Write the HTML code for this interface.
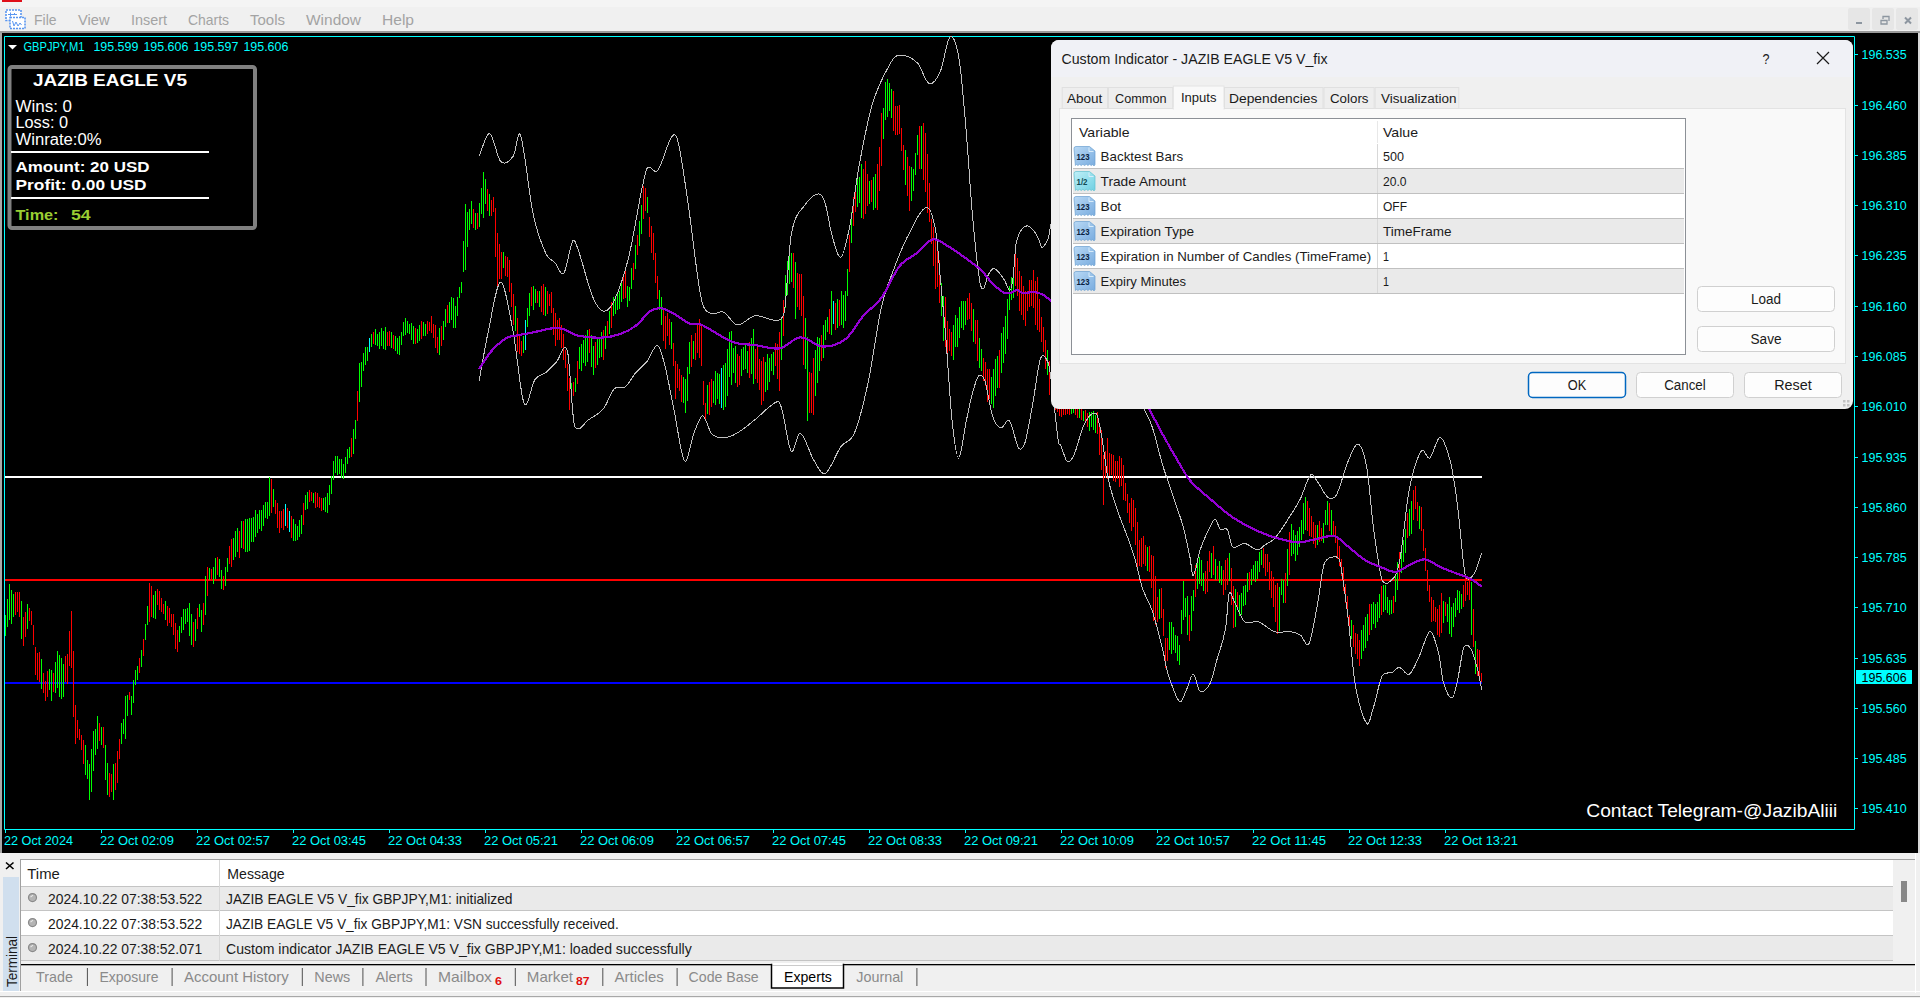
<!DOCTYPE html><html><head><meta charset="utf-8"><style>html,body{margin:0;padding:0;width:1920px;height:998px;overflow:hidden;background:#f0f0f0;font-family:"Liberation Sans",sans-serif}</style></head><body><svg width="1920" height="998" viewBox="0 0 1920 998" font-family="Liberation Sans" style="position:absolute;left:0;top:0">
<rect x="0" y="0" width="1920" height="998" fill="#f0f0f0"/>
<rect x="0" y="0" width="1920" height="7" fill="#f4f4f4"/>
<rect x="2" y="0" width="20" height="2" fill="#e0101a"/>
<rect x="0" y="7" width="1920" height="25" fill="#f0f0f0"/>
<rect x="0" y="31" width="1920" height="2" fill="#9a9a9a"/>
<g transform="translate(5,9)" fill="none"><rect x="1" y="1" width="15" height="10.5" fill="#fff" stroke="#5a96f0" stroke-width="1.6" stroke-dasharray="2 1"/><rect x="5" y="8.5" width="15" height="11" fill="#fff" stroke="#5a96f0" stroke-width="1.6" stroke-dasharray="2 1"/><path d="M3 5.5h9M5.5 3.5v4M9 4l2 2" stroke="#5a96f0" stroke-width="1"/><path d="M7.5 12l1.5 5 2-4 2 4 2-3 1.5 2" stroke="#5a96f0" stroke-width="1"/></g>
<text x="34" y="25.2" font-size="15" fill="#a3a3a3" textLength="22.5" lengthAdjust="spacingAndGlyphs">File</text>
<text x="78" y="25.2" font-size="15" fill="#a3a3a3" textLength="31.5" lengthAdjust="spacingAndGlyphs">View</text>
<text x="131" y="25.2" font-size="15" fill="#a3a3a3" textLength="36" lengthAdjust="spacingAndGlyphs">Insert</text>
<text x="188" y="25.2" font-size="15" fill="#a3a3a3" textLength="41" lengthAdjust="spacingAndGlyphs">Charts</text>
<text x="250" y="25.2" font-size="15" fill="#a3a3a3" textLength="35" lengthAdjust="spacingAndGlyphs">Tools</text>
<text x="306" y="25.2" font-size="15" fill="#a3a3a3" textLength="55" lengthAdjust="spacingAndGlyphs">Window</text>
<text x="382" y="25.2" font-size="15" fill="#a3a3a3" textLength="32" lengthAdjust="spacingAndGlyphs">Help</text>
<rect x="1848" y="8" width="22" height="22" rx="2" fill="#e6e6e6"/>
<rect x="1872" y="8" width="22" height="22" rx="2" fill="#e6e6e6"/>
<rect x="1896" y="8" width="22" height="22" rx="2" fill="#e6e6e6"/>
<path d="M1856 23h6" stroke="#8d96a0" stroke-width="2"/>
<path d="M1881 20.5h6v3.5h-6z M1883 19v-2.5h6v4.5" stroke="#8d96a0" stroke-width="1.3" fill="none"/>
<path d="M1905 17.5l6 6M1911 17.5l-6 6" stroke="#8d96a0" stroke-width="2"/>
<rect x="0" y="33" width="2" height="820" fill="#a8a8a8"/>
<rect x="2" y="33" width="1916" height="820" fill="#000"/>
<rect x="1918" y="33" width="2" height="820" fill="#d8d8d8"/>
<path d="M4.5 36.5H1854.5V829.5H4.5Z" stroke="#00ffff" fill="none" stroke-width="1"/>
<rect x="5" y="476" width="1477" height="2" fill="#ffffff"/>
<rect x="5" y="579" width="1477" height="2" fill="#ff0000"/>
<rect x="5" y="682" width="1477" height="2" fill="#0000ff"/>
<path d="M5.5 615V636M7.5 599V627M9.5 584V620M11.5 590V624M13.5 594V617M21.5 601V639M27.5 604V629M41.5 659V689M49.5 669V690M51.5 670V701M55.5 662V693M57.5 651V688M59.5 655V697M61.5 658V699M63.5 664V697M85.5 745V775M87.5 760V779M89.5 764V800M91.5 749V792M93.5 731V771M95.5 729V755M97.5 716V749M101.5 727V745M105.5 745V780M107.5 763V795M113.5 764V800M121.5 723V744M123.5 719V734M125.5 696V739M127.5 695V716M131.5 696V715M133.5 680V703M135.5 670V685M137.5 666V680M141.5 650V667M145.5 624V640M147.5 606V625M153.5 595V618M155.5 591V619M165.5 601V620M179.5 626V642M181.5 617V633M183.5 609V630M185.5 609V624M187.5 608V622M189.5 603V636M191.5 614V645M195.5 619V641M199.5 604V617M201.5 610V632M205.5 576V615M209.5 568V580M213.5 567V584M215.5 558V579M219.5 559V577M221.5 570V589M225.5 567V586M227.5 558V572M233.5 538V560M235.5 531V557M237.5 528V552M241.5 521V548M245.5 519V552M247.5 519V552M249.5 518V551M251.5 518V542M253.5 517V542M255.5 510V537M257.5 514V533M259.5 510V529M261.5 510V531M263.5 505V526M265.5 502V518M267.5 502V519M269.5 477V516M273.5 489V507M293.5 519V541M295.5 524V541M297.5 526V540M299.5 520V537M301.5 515V534M305.5 495V510M307.5 492V509M313.5 493V503M323.5 498V510M325.5 497V512M327.5 493V513M329.5 485V505M331.5 476V494M333.5 461V480M335.5 456V473M337.5 456V475M339.5 459V474M341.5 459V478M343.5 464V479M345.5 457V473M347.5 449V464M349.5 447V458M353.5 429V454M355.5 420V439M359.5 363V402M361.5 362V387M363.5 353V371M365.5 347V365M367.5 347V361M371.5 334V347M375.5 329V345M377.5 334V346M379.5 332V349M381.5 328V346M383.5 331V349M385.5 327V350M391.5 332V348M395.5 336V351M397.5 338V354M399.5 336V355M401.5 332V345M403.5 322V336M405.5 318V335M407.5 321V333M409.5 324V334M411.5 323V340M413.5 326V344M417.5 329V343M419.5 325V341M423.5 322V336M425.5 324V336M439.5 328V355M443.5 321V340M445.5 309V327M449.5 302V323M451.5 297V320M453.5 298V328M455.5 306V328M457.5 297V316M459.5 287V298M461.5 282V293M463.5 241V272M465.5 204V270M467.5 212V247M469.5 209V230M471.5 201V224M475.5 213V230M479.5 203V227M481.5 188V214M483.5 172V218M485.5 179V204M489.5 194V216M503.5 252V268M515.5 306V331M523.5 336V353M527.5 308V327M529.5 293V316M533.5 286V310M535.5 289V303M539.5 291V307M545.5 287V316M571.5 383V399M575.5 378V392M579.5 347V369M581.5 344V371M583.5 340V363M585.5 335V366M587.5 330V362M591.5 335V367M593.5 346V375M597.5 337V365M599.5 338V358M601.5 332V357M605.5 326V349M609.5 311V334M613.5 297V316M615.5 298V314M617.5 292V310M619.5 291V309M621.5 280V302M627.5 286V307M629.5 287V301M631.5 268V289M635.5 245V269M639.5 221V246M641.5 205V234M647.5 197V213M659.5 290V310M661.5 297V325M671.5 322V349M683.5 377V403M685.5 379V413M687.5 367V401M689.5 342V374M693.5 341V359M707.5 385V414M713.5 381V403M715.5 371V405M717.5 373V399M719.5 374V404M723.5 365V410M725.5 363V407M727.5 349V396M729.5 332V377M731.5 331V385M733.5 348V373M735.5 346V383M741.5 349V376M743.5 347V370M745.5 344V369M747.5 351V373M751.5 338V374M753.5 329V384M765.5 362V392M767.5 354V390M769.5 358V382M771.5 354V371M773.5 352V375M781.5 318V360M785.5 275V308M787.5 261V295M789.5 248V284M791.5 253V282M795.5 262V319M805.5 318V369M807.5 337V421M815.5 350V396M817.5 337V383M819.5 338V371M823.5 325V358M825.5 320V340M827.5 317V332M831.5 291V335M837.5 299V328M841.5 291V325M843.5 295V328M845.5 291V321M847.5 269V296M851.5 212V243M857.5 178V207M859.5 177V203M861.5 164V218M869.5 181V204M873.5 177V210M875.5 174V208M883.5 108V139M885.5 82V120M887.5 79V117M889.5 83V111M891.5 89V118M905.5 150V185M911.5 167V201M913.5 169V191M915.5 153V175M917.5 135V155M921.5 126V169M941.5 283V316M943.5 296V341M953.5 325V360M955.5 315V347M957.5 318V347M959.5 307V338M961.5 301V328M963.5 301V330M965.5 301V325M973.5 309V342M979.5 338V368M981.5 349V371M991.5 377V404M993.5 369V408M995.5 359V396M997.5 356V388M1001.5 333V373M1003.5 327V363M1005.5 316V354M1007.5 299V339M1009.5 286V310M1011.5 277V300M1013.5 267V298M1047.5 350V375M1071.5 407V414M1073.5 407V413M1079.5 408V418M1083.5 411V421M1089.5 412V431M1091.5 412V427M1093.5 411V430M1095.5 415V433M1147.5 547V571M1159.5 589V619M1169.5 622V650M1171.5 622V654M1173.5 627V650M1175.5 635V653M1177.5 636V661M1179.5 645V665M1181.5 610V634M1183.5 581V620M1185.5 598V617M1187.5 596V635M1191.5 596V631M1193.5 590V611M1197.5 559V589M1199.5 557V584M1201.5 560V586M1203.5 573V591M1211.5 553V578M1215.5 559V580M1219.5 561V583M1221.5 566V585M1229.5 553V581M1235.5 589V627M1239.5 595V616M1241.5 593V615M1243.5 586V606M1245.5 585V605M1247.5 573V592M1251.5 569V585M1253.5 565V580M1255.5 561V582M1257.5 561V579M1259.5 552V572M1261.5 550V565M1279.5 587V631M1281.5 579V595M1283.5 580V603M1287.5 549V586M1291.5 524V556M1293.5 530V554M1295.5 535V561M1297.5 531V555M1299.5 527V547M1301.5 520V540M1303.5 503V534M1305.5 497V530M1317.5 525V545M1323.5 523V543M1325.5 510V525M1327.5 501V525M1331.5 510V537M1351.5 620V639M1361.5 630V659M1363.5 625V651M1365.5 617V648M1367.5 614V641M1371.5 604V630M1373.5 602V624M1375.5 604V628M1377.5 602V622M1379.5 594V618M1383.5 585V612M1385.5 585V610M1387.5 597V613M1389.5 600V615M1391.5 600V614M1395.5 575V602M1397.5 562V590M1401.5 546V573M1403.5 540V562M1405.5 529V553M1409.5 509V536M1411.5 501V534M1419.5 506V529M1443.5 601V623M1447.5 604V622M1449.5 597V634M1451.5 607V637M1453.5 603V627M1455.5 598V617M1457.5 590V610M1459.5 591V613M1461.5 594V609M1471.5 582V635M1475.5 641V674" stroke="#00ff00" stroke-width="1"/>
<path d="M15.5 592V615M17.5 592V612M19.5 592V617M23.5 617V646M25.5 612V637M29.5 608V621M31.5 611V625M33.5 625V645M35.5 647V675M37.5 653V680M39.5 652V682M43.5 673V693M45.5 681V701M47.5 671V697M53.5 673V692M65.5 656V682M67.5 654V684M69.5 631V666M71.5 611V668M73.5 651V717M75.5 705V744M77.5 720V738M79.5 729V740M81.5 735V750M83.5 740V764M99.5 723V741M103.5 727V748M109.5 773V797M111.5 774V792M115.5 763V790M117.5 751V783M119.5 739V759M129.5 692V700M139.5 658V673M143.5 639V656M149.5 583V622M151.5 586V617M157.5 589V605M159.5 591V610M161.5 598V612M163.5 604V614M167.5 606V626M169.5 608V623M171.5 614V627M173.5 614V635M175.5 623V649M177.5 630V652M193.5 622V647M197.5 608V629M203.5 603V625M207.5 567V596M211.5 569V581M217.5 557V575M223.5 576V590M229.5 546V564M231.5 539V567M239.5 531V558M243.5 521V549M271.5 479V513M275.5 500V514M277.5 503V528M279.5 511V533M281.5 511V528M283.5 509V530M287.5 508V528M291.5 516V538M303.5 503V525M309.5 490V502M311.5 492V501M315.5 492V508M317.5 493V507M319.5 497V508M321.5 498V511M351.5 438V457M357.5 391V421M373.5 332V344M387.5 332V346M389.5 331V346M393.5 335V349M415.5 328V344M421.5 321V339M427.5 321V334M429.5 322V331M431.5 316V333M433.5 324V338M435.5 325V348M437.5 337V353M441.5 326V346M447.5 305V323M473.5 209V228M477.5 213V229M487.5 189V211M491.5 200V216M493.5 197V212M495.5 208V257M497.5 233V289M499.5 244V279M501.5 252V279M505.5 256V276M507.5 257V277M509.5 260V292M511.5 283V307M513.5 294V325M517.5 318V352M519.5 335V354M521.5 341V356M531.5 287V306M537.5 291V303M541.5 286V312M543.5 284V315M547.5 291V314M549.5 294V306M551.5 292V313M553.5 308V335M555.5 313V346M557.5 320V340M559.5 318V340M561.5 325V348M563.5 334V360M565.5 350V368M567.5 364V391M569.5 378V410M573.5 382V396M577.5 361V384M589.5 329V353M595.5 342V368M603.5 330V360M607.5 321V338M611.5 302V328M623.5 274V299M625.5 269V298M633.5 263V280M637.5 235V255M643.5 186V219M645.5 188V211M649.5 217V237M651.5 226V253M653.5 233V260M655.5 253V283M657.5 276V299M663.5 308V341M665.5 316V349M667.5 313V336M669.5 319V345M673.5 343V366M675.5 361V399M677.5 364V388M679.5 369V391M681.5 375V402M691.5 335V367M695.5 333V360M697.5 323V353M699.5 319V358M701.5 325V366M703.5 381V405M705.5 403V420M709.5 382V415M711.5 379V407M737.5 354V387M739.5 356V385M749.5 342V378M755.5 349V379M757.5 346V383M759.5 359V390M761.5 361V405M763.5 357V401M775.5 343V366M777.5 344V379M779.5 332V391M783.5 300V336M793.5 253V288M797.5 273V307M799.5 274V310M801.5 274V316M803.5 296V365M809.5 372V413M811.5 373V413M813.5 358V415M821.5 335V361M829.5 309V334M835.5 303V330M839.5 300V326M849.5 235V272M853.5 197V226M855.5 188V212M863.5 169V219M865.5 161V214M867.5 174V206M871.5 180V202M877.5 164V210M879.5 147V191M881.5 113V166M893.5 91V131M895.5 106V135M897.5 106V135M899.5 105V134M901.5 128V151M903.5 145V170M907.5 157V196M909.5 166V211M919.5 126V169M923.5 123V180M925.5 133V192M927.5 154V213M929.5 183V222M931.5 219V244M933.5 227V266M935.5 239V289M937.5 251V287M939.5 260V303M945.5 297V347M947.5 321V353M949.5 329V351M951.5 332V356M967.5 298V320M969.5 293V319M971.5 303V331M975.5 320V344M977.5 320V361M983.5 358V381M985.5 362V386M987.5 369V402M989.5 369V399M999.5 350V388M1015.5 254V286M1017.5 258V296M1019.5 271V311M1021.5 276V315M1023.5 286V320M1025.5 291V326M1027.5 291V311M1029.5 280V307M1031.5 280V306M1033.5 270V308M1035.5 281V325M1037.5 277V330M1039.5 299V332M1041.5 317V342M1043.5 327V352M1045.5 340V369M1049.5 361V395M1051.5 381V401M1053.5 387V403M1055.5 390V410M1057.5 397V412M1059.5 406V416M1061.5 407V417M1063.5 408V415M1065.5 407V415M1067.5 408V414M1069.5 408V415M1075.5 409V415M1077.5 408V418M1081.5 407V420M1085.5 410V423M1087.5 413V427M1097.5 412V434M1099.5 423V455M1101.5 430V470M1103.5 455V505M1105.5 451V478M1107.5 438V479M1109.5 453V476M1111.5 454V475M1113.5 455V481M1115.5 461V482M1117.5 461V479M1119.5 456V487M1121.5 458V486M1123.5 465V500M1125.5 483V501M1127.5 494V513M1129.5 503V523M1131.5 498V531M1133.5 500V527M1135.5 508V545M1137.5 522V567M1139.5 540V566M1141.5 538V567M1143.5 536V564M1145.5 545V566M1149.5 546V572M1151.5 555V588M1153.5 556V621M1155.5 576V625M1157.5 597V622M1161.5 588V618M1163.5 609V636M1165.5 638V668M1167.5 638V661M1189.5 615V641M1195.5 565V597M1205.5 571V594M1207.5 561V592M1209.5 551V572M1213.5 546V575M1217.5 566V580M1223.5 570V595M1225.5 560V590M1227.5 558V585M1231.5 568V605M1233.5 586V628M1237.5 592V609M1249.5 572V590M1263.5 548V568M1265.5 554V576M1267.5 554V572M1269.5 562V590M1271.5 571V598M1273.5 577V607M1275.5 585V622M1277.5 583V634M1285.5 573V603M1289.5 532V575M1307.5 501V531M1309.5 508V536M1311.5 516V537M1313.5 522V544M1315.5 525V548M1319.5 521V542M1321.5 528V541M1329.5 503V531M1333.5 521V537M1335.5 526V543M1337.5 539V559M1339.5 546V566M1341.5 559V576M1343.5 567V591M1345.5 584V603M1347.5 596V618M1349.5 615V633M1353.5 625V647M1355.5 633V654M1357.5 634V659M1359.5 640V666M1369.5 604V635M1381.5 586V615M1393.5 596V613M1399.5 552V579M1407.5 513V538M1413.5 490V520M1415.5 486V509M1417.5 502V521M1421.5 507V531M1423.5 529V551M1425.5 548V571M1427.5 570V591M1429.5 585V602M1431.5 597V622M1433.5 600V621M1435.5 607V622M1437.5 609V635M1439.5 605V637M1441.5 593V633M1445.5 602V616M1463.5 585V607M1465.5 578V601M1467.5 582V595M1469.5 577V600M1473.5 609V647M1477.5 649V676M1479.5 650V680M1481.5 673V682" stroke="#ff0000" stroke-width="1"/>
<path d="M285.5 504V526M289.5 511V532M369.5 338V352M525.5 320V350M721.5 368V408M833.5 301V324" stroke="#00ffff" stroke-width="1"/>
<path d="M479.0 156.1 C482.6 148.6 486.2 132.8 489.8 133.7 C493.4 134.6 497.1 158.0 500.7 161.5 C504.9 165.5 509.1 161.7 513.3 156.1 C515.7 152.9 518.1 128.2 520.5 135.2 C524.7 147.4 528.9 194.1 533.1 213.8 C537.3 233.5 541.5 244.0 545.8 253.5 C548.8 260.2 551.8 259.2 554.8 262.5 C557.8 265.8 560.8 276.9 563.8 273.3 C566.8 269.7 569.8 245.7 572.8 240.9 C574.6 237.9 576.4 244.8 578.2 249.9 C583.0 263.4 587.8 285.1 592.7 296.8 C596.3 305.5 599.9 310.6 603.5 311.2 C607.1 311.8 610.7 308.1 614.3 300.4 C619.1 290.1 623.9 276.6 628.7 257.1 C634.7 232.7 640.8 186.7 646.8 168.7 C650.4 163.3 654.0 174.7 657.6 170.5 C663.6 163.5 669.6 130.6 675.6 135.2 C679.2 137.9 682.8 169.1 686.5 192.2 C691.3 222.9 696.1 272.0 700.9 296.8 C703.9 312.3 706.9 311.0 709.9 313.0 C714.4 316.1 719.0 310.2 723.5 312.2 C728.1 314.1 732.6 324.3 737.1 324.8 C743.1 325.5 749.1 316.5 755.1 315.8 C762.6 314.9 770.2 321.5 777.7 320.3 C779.9 319.9 782.2 320.3 784.5 311.3 C786.7 297.0 789.0 246.3 791.2 234.6 C795.7 211.0 800.3 212.0 804.8 205.2 C809.3 198.5 813.8 194.4 818.3 193.9 C820.6 193.7 822.8 196.2 825.1 203.0 C827.3 209.7 829.6 226.8 831.8 234.6 C834.8 244.9 837.9 258.6 840.9 257.1 C843.9 255.6 846.9 240.6 849.9 225.5 C852.9 210.5 855.9 183.1 858.9 166.9 C863.4 142.5 867.9 118.5 872.5 103.7 C878.5 83.9 884.5 73.9 890.5 63.1 C893.5 57.7 896.5 55.0 899.5 55.0 C905.5 55.0 911.6 57.2 917.6 63.1 C921.3 66.7 925.1 81.9 928.9 83.4 C932.6 84.9 936.4 80.3 940.1 72.1 C943.5 64.8 946.8 39.3 950.1 36.9 C953.1 34.8 956.0 41.6 959.0 58.6 C961.3 71.4 963.5 99.9 965.8 126.3 C968.1 152.6 970.3 191.6 972.6 216.5 C975.0 243.9 977.5 266.9 980.0 283.0 C981.2 288.4 982.4 289.6 983.6 288.4 C985.2 286.8 986.8 277.5 988.4 274.6 C990.4 270.9 992.4 268.0 994.4 268.6 C997.6 269.6 1000.8 274.9 1004.0 279.4 C1006.0 282.2 1008.0 290.6 1010.0 290.3 C1011.0 290.1 1012.0 285.6 1013.0 278.0 C1014.0 270.4 1015.0 249.9 1016.0 244.5 C1018.0 233.6 1020.0 232.1 1022.0 229.0 C1024.0 226.0 1026.0 225.7 1028.0 226.0 C1030.0 226.3 1032.0 228.5 1034.0 231.0 C1035.7 233.1 1037.3 236.1 1039.0 239.7 C1039.8 241.4 1040.6 246.4 1041.4 247.0 C1042.6 248.0 1043.8 246.1 1045.0 244.5 C1046.2 242.9 1047.4 241.2 1048.6 237.3 C1049.7 233.7 1050.9 220.0 1052.0 222.0 C1080.9 273.2 1109.8 338.0 1138.8 396.8 C1140.5 400.3 1142.2 404.9 1143.9 408.7 C1146.7 415.1 1149.6 419.0 1152.4 427.5 C1155.8 437.7 1159.2 453.4 1162.6 464.9 C1164.9 472.7 1167.2 478.6 1169.4 485.4 C1171.7 492.2 1174.0 499.0 1176.2 505.8 C1178.5 512.6 1180.8 517.7 1183.1 526.2 C1185.3 534.8 1187.6 545.9 1189.9 556.9 C1191.0 562.4 1192.1 576.4 1193.3 575.6 C1195.5 574.1 1197.8 556.7 1200.1 550.1 C1203.5 540.2 1206.9 533.1 1210.3 526.2 C1212.0 522.8 1213.7 518.9 1215.4 519.4 C1217.1 520.0 1218.8 528.2 1220.5 529.6 C1222.8 531.6 1225.1 526.4 1227.3 529.6 C1229.0 532.1 1230.7 545.3 1232.4 546.7 C1236.4 549.9 1240.4 542.7 1244.4 543.3 C1248.9 543.9 1253.4 549.7 1258.0 550.1 C1260.3 550.3 1262.5 546.6 1264.8 545.0 C1268.2 542.6 1271.6 542.1 1275.0 538.2 C1280.1 532.3 1285.1 523.7 1290.2 515.8 C1293.6 510.5 1297.0 505.6 1300.4 498.8 C1303.8 492.0 1307.2 478.3 1310.7 474.9 C1312.9 472.7 1315.2 478.8 1317.5 481.7 C1320.9 486.2 1324.3 494.6 1327.7 497.1 C1330.5 499.1 1333.4 499.6 1336.2 495.4 C1340.2 488.4 1344.1 470.5 1348.1 461.3 C1351.5 453.4 1354.9 443.0 1358.3 444.3 C1361.2 445.3 1364.0 452.4 1366.9 468.1 C1369.1 480.7 1371.4 512.8 1373.7 529.4 C1376.5 550.2 1379.3 570.7 1382.2 580.5 C1384.5 583.9 1386.7 584.5 1389.0 582.2 C1392.4 578.8 1395.8 579.1 1399.2 563.5 C1402.6 547.9 1406.0 505.8 1409.4 488.6 C1413.4 468.4 1417.4 457.1 1421.3 451.1 C1424.2 446.8 1427.0 460.0 1429.9 457.9 C1433.3 455.4 1436.7 436.9 1440.1 437.5 C1443.5 438.0 1446.9 448.4 1450.3 461.3 C1452.6 469.9 1454.8 485.0 1457.1 502.2 C1460.0 523.6 1462.8 565.2 1465.6 577.1 C1468.5 581.4 1471.3 577.9 1474.1 573.7 C1476.6 570.0 1479.1 560.1 1481.6 553.3" stroke="#c0c0c0" fill="none" stroke-width="1" shape-rendering="crispEdges"/>
<path d="M479.0 381.5 C482.0 365.3 485.0 346.6 488.0 332.8 C492.2 313.6 496.5 282.3 500.7 282.3 C504.9 282.3 509.1 311.2 513.3 332.8 C516.9 351.4 520.5 395.4 524.1 403.2 C527.7 411.0 531.3 384.9 534.9 379.7 C538.5 374.6 542.2 375.5 545.8 372.5 C549.4 369.5 553.0 365.3 556.6 361.7 C560.2 358.1 563.8 340.1 567.4 350.9 C569.8 359.5 572.2 419.0 574.6 426.6 C579.4 433.9 584.2 422.4 589.0 419.4 C593.9 416.4 598.7 414.4 603.5 408.6 C607.1 404.2 610.7 392.4 614.3 388.8 C617.9 385.2 621.5 389.7 625.1 387.0 C628.7 384.2 632.3 376.7 635.9 372.5 C639.6 368.3 643.2 366.2 646.8 361.7 C650.4 357.2 654.0 344.7 657.6 345.5 C660.0 345.9 662.4 356.0 664.8 365.3 C667.8 377.0 670.8 394.1 673.8 408.6 C677.4 426.0 681.0 456.3 684.6 460.9 C687.7 464.7 690.7 441.4 693.7 433.9 C696.7 426.3 699.7 415.8 702.7 415.8 C705.7 415.8 708.7 430.7 711.7 433.9 C715.6 438.0 719.6 437.7 723.5 437.6 C728.1 437.5 732.6 435.7 737.1 433.1 C743.1 429.7 749.1 424.3 755.1 419.6 C762.6 413.7 770.2 404.0 777.7 401.5 C779.2 401.0 780.7 405.0 782.2 410.5 C785.2 421.6 788.2 447.4 791.2 451.2 C794.2 454.9 797.2 431.9 800.3 433.1 C804.8 434.9 809.3 452.8 813.8 460.2 C817.6 466.3 821.3 475.6 825.1 473.7 C830.3 471.1 835.6 453.9 840.9 446.6 C845.4 440.4 849.9 443.6 854.4 433.1 C858.9 422.6 863.4 404.5 867.9 383.5 C872.5 362.4 877.0 326.3 881.5 306.8 C886.0 287.2 890.5 278.2 895.0 266.1 C899.5 254.1 904.0 242.9 908.6 234.6 C914.6 223.4 920.6 208.5 926.6 207.5 C929.6 207.0 932.6 214.3 935.6 230.0 C937.3 238.5 938.9 262.8 940.5 280.0 C942.3 299.4 944.2 317.7 946.0 340.0 C948.0 364.3 950.0 401.1 952.0 420.0 C954.2 440.5 956.3 458.0 958.5 458.0 C961.2 458.0 963.8 432.4 966.5 420.0 C968.3 411.4 970.2 401.7 972.0 395.0 C974.2 387.1 976.3 378.6 978.5 376.0 C980.5 373.6 982.6 376.0 984.6 380.0 C987.3 387.6 989.9 408.0 992.6 416.0 C995.3 424.0 997.9 427.2 1000.6 428.0 C1003.6 428.9 1006.6 417.7 1009.6 421.0 C1012.6 424.3 1015.6 443.4 1018.6 448.0 C1020.6 451.1 1022.6 448.0 1024.6 444.0 C1027.3 435.6 1030.0 418.4 1032.7 404.0 C1035.4 389.8 1038.0 364.7 1040.7 358.0 C1043.4 352.0 1046.0 358.0 1048.7 364.0 C1052.0 379.9 1055.4 421.1 1058.7 444.0 C1059.3 444.9 1059.9 443.6 1060.4 444.5 C1062.7 449.2 1065.0 459.8 1067.2 461.5 C1069.5 463.2 1071.8 459.7 1074.1 454.7 C1077.5 447.2 1080.9 430.3 1084.3 424.1 C1088.3 416.7 1092.2 411.5 1096.2 413.8 C1097.9 414.9 1099.6 425.0 1101.3 434.3 C1103.6 446.6 1105.8 468.1 1108.1 478.6 C1111.5 494.2 1114.9 502.4 1118.3 512.6 C1121.7 522.8 1125.1 530.3 1128.6 539.9 C1130.8 546.2 1133.1 552.4 1135.4 560.3 C1137.6 568.2 1139.9 580.7 1142.2 587.5 C1145.6 597.8 1149.0 601.2 1152.4 611.4 C1155.8 621.6 1159.2 635.2 1162.6 648.9 C1164.3 655.7 1166.0 667.4 1167.7 672.7 C1171.7 685.0 1175.7 698.0 1179.6 701.6 C1181.9 703.7 1184.2 694.3 1186.5 689.7 C1188.7 685.2 1191.0 674.1 1193.3 674.4 C1195.5 674.7 1197.8 690.3 1200.1 691.4 C1203.5 693.1 1206.9 689.4 1210.3 682.9 C1212.6 678.6 1214.8 667.1 1217.1 659.1 C1220.0 649.0 1222.8 643.8 1225.6 628.4 C1226.8 622.3 1227.9 598.0 1229.0 594.4 C1230.7 588.9 1232.4 598.1 1234.1 601.2 C1237.5 607.2 1241.0 618.7 1244.4 621.6 C1248.9 625.5 1253.4 620.1 1258.0 621.6 C1263.7 623.5 1269.3 630.1 1275.0 631.8 C1280.1 633.4 1285.1 631.0 1290.2 631.6 C1293.6 632.0 1297.0 632.8 1300.4 635.0 C1303.3 636.8 1306.1 648.6 1309.0 643.5 C1311.8 638.4 1314.6 619.2 1317.5 604.4 C1319.7 592.5 1322.0 569.8 1324.3 563.5 C1327.7 556.7 1331.1 557.4 1334.5 556.7 C1336.2 556.3 1337.9 556.7 1339.6 560.1 C1342.4 572.9 1345.3 595.3 1348.1 618.0 C1350.4 636.1 1352.7 669.9 1354.9 682.7 C1358.9 705.1 1362.9 718.5 1366.9 723.6 C1369.1 726.5 1371.4 713.6 1373.7 706.5 C1376.5 697.7 1379.3 681.0 1382.2 675.9 C1385.6 670.8 1389.0 674.2 1392.4 672.5 C1394.7 671.3 1396.9 667.1 1399.2 667.4 C1402.6 667.7 1406.0 676.2 1409.4 674.2 C1412.8 672.2 1416.2 662.5 1419.6 655.4 C1423.1 648.4 1426.5 632.2 1429.9 631.6 C1432.7 631.1 1435.5 641.4 1438.4 652.0 C1440.1 658.4 1441.8 676.9 1443.5 682.7 C1446.3 692.3 1449.2 698.0 1452.0 698.0 C1453.7 698.0 1455.4 690.0 1457.1 682.7 C1459.4 673.0 1461.7 652.6 1463.9 646.9 C1466.2 643.5 1468.5 645.2 1470.7 648.6 C1473.0 652.3 1475.3 660.6 1477.5 669.1 C1478.9 674.2 1480.3 682.7 1481.6 689.5" stroke="#c0c0c0" fill="none" stroke-width="1" shape-rendering="crispEdges"/>
<path d="M479.0 368.9 C483.2 362.9 487.4 355.7 491.6 350.9 C496.5 345.4 501.3 341.2 506.1 338.3 C509.7 336.0 513.3 336.1 516.9 335.4 C521.7 334.3 526.5 333.8 531.3 332.8 C538.5 331.4 545.8 329.0 553.0 328.2 C556.6 327.8 560.2 328.2 563.8 329.2 C568.6 330.7 573.4 334.7 578.2 335.7 C586.6 337.5 595.1 338.0 603.5 337.5 C609.5 337.2 615.5 335.8 621.5 333.6 C626.3 331.8 631.1 329.4 635.9 325.6 C640.8 321.9 645.6 314.5 650.4 311.2 C654.0 308.7 657.6 307.8 661.2 308.3 C666.0 309.0 670.8 312.2 675.6 314.8 C680.4 317.4 685.2 322.0 690.1 323.8 C693.7 325.2 697.3 323.0 700.9 324.5 C711.4 329.1 722.0 338.0 732.6 342.0 C740.1 344.8 747.6 344.1 755.1 345.1 C763.4 346.2 771.7 349.7 779.9 348.3 C786.7 347.1 793.5 337.7 800.3 337.4 C807.8 337.1 815.3 346.2 822.8 346.5 C830.3 346.8 837.9 344.9 845.4 339.2 C851.4 334.7 857.4 322.7 863.4 315.8 C869.4 308.9 875.5 306.0 881.5 297.7 C887.5 289.5 893.5 273.7 899.5 266.1 C905.5 258.6 911.6 257.6 917.6 252.6 C922.1 248.9 926.6 242.2 931.1 240.0 C934.1 238.5 937.1 239.5 940.1 241.3 C953.4 249.2 966.7 258.3 980.0 269.0 C984.0 272.2 988.0 279.1 992.0 283.0 C996.0 286.9 1000.0 290.7 1004.0 292.7 C1006.3 293.9 1008.7 293.1 1011.0 292.7 C1013.1 292.3 1015.2 290.2 1017.3 290.2 C1018.9 290.2 1020.4 292.5 1022.0 292.7 C1027.3 293.3 1032.5 291.3 1037.8 292.7 C1042.0 293.9 1046.2 296.3 1050.4 300.5 C1081.0 331.0 1111.6 363.2 1142.2 396.8 C1144.5 399.3 1146.7 404.6 1149.0 408.7 C1153.5 417.1 1158.1 426.0 1162.6 434.3 C1167.2 442.5 1171.7 450.5 1176.2 458.1 C1180.8 465.8 1185.3 474.8 1189.9 480.3 C1196.7 488.4 1203.5 493.0 1210.3 499.0 C1217.1 505.0 1223.9 511.2 1230.7 516.0 C1237.5 520.8 1244.4 524.5 1251.2 527.9 C1258.0 531.3 1264.8 534.3 1271.6 536.5 C1280.1 539.1 1288.6 541.7 1297.0 542.4 C1302.7 542.8 1308.4 540.6 1314.1 539.6 C1320.9 538.5 1327.7 534.9 1334.5 536.2 C1339.0 537.1 1343.6 542.9 1348.1 546.5 C1353.8 550.9 1359.5 556.6 1365.1 560.1 C1370.8 563.6 1376.5 565.4 1382.2 567.6 C1386.7 569.3 1391.3 572.4 1395.8 572.0 C1400.3 571.6 1404.9 567.2 1409.4 565.2 C1414.5 563.0 1419.6 559.1 1424.8 559.4 C1429.9 559.7 1435.0 564.6 1440.1 566.9 C1445.8 569.4 1451.4 571.5 1457.1 573.7 C1461.7 575.5 1466.2 576.4 1470.7 578.8 C1474.4 580.7 1478.0 584.0 1481.6 586.6" stroke="#9400d3" fill="none" stroke-width="2.2" shape-rendering="crispEdges"/>
<path d="M8 45h9l-4.5 4.5z" fill="#fff"/>
<text x="23.4" y="50.8" font-size="12" fill="#00ffff" textLength="61" lengthAdjust="spacingAndGlyphs">GBPJPY,M1</text>
<text x="93.4" y="50.8" font-size="12" fill="#00ffff" textLength="45" lengthAdjust="spacingAndGlyphs">195.599</text>
<text x="143.4" y="50.8" font-size="12" fill="#00ffff" textLength="45" lengthAdjust="spacingAndGlyphs">195.606</text>
<text x="193.4" y="50.8" font-size="12" fill="#00ffff" textLength="45" lengthAdjust="spacingAndGlyphs">195.597</text>
<text x="243.4" y="50.8" font-size="12" fill="#00ffff" textLength="45" lengthAdjust="spacingAndGlyphs">195.606</text>
<path d="M1855 54.5h3" stroke="#00ffff"/>
<text x="1861.6" y="58.6" font-size="12" fill="#00ffff" textLength="45" lengthAdjust="spacingAndGlyphs">196.535</text>
<path d="M1855 105.5h3" stroke="#00ffff"/>
<text x="1861.6" y="109.6" font-size="12" fill="#00ffff" textLength="45" lengthAdjust="spacingAndGlyphs">196.460</text>
<path d="M1855 155.5h3" stroke="#00ffff"/>
<text x="1861.6" y="159.6" font-size="12" fill="#00ffff" textLength="45" lengthAdjust="spacingAndGlyphs">196.385</text>
<path d="M1855 205.5h3" stroke="#00ffff"/>
<text x="1861.6" y="209.6" font-size="12" fill="#00ffff" textLength="45" lengthAdjust="spacingAndGlyphs">196.310</text>
<path d="M1855 255.5h3" stroke="#00ffff"/>
<text x="1861.6" y="259.6" font-size="12" fill="#00ffff" textLength="45" lengthAdjust="spacingAndGlyphs">196.235</text>
<path d="M1855 306.5h3" stroke="#00ffff"/>
<text x="1861.6" y="310.6" font-size="12" fill="#00ffff" textLength="45" lengthAdjust="spacingAndGlyphs">196.160</text>
<path d="M1855 356.5h3" stroke="#00ffff"/>
<text x="1861.6" y="360.6" font-size="12" fill="#00ffff" textLength="45" lengthAdjust="spacingAndGlyphs">196.085</text>
<path d="M1855 406.5h3" stroke="#00ffff"/>
<text x="1861.6" y="410.6" font-size="12" fill="#00ffff" textLength="45" lengthAdjust="spacingAndGlyphs">196.010</text>
<path d="M1855 457.5h3" stroke="#00ffff"/>
<text x="1861.6" y="461.6" font-size="12" fill="#00ffff" textLength="45" lengthAdjust="spacingAndGlyphs">195.935</text>
<path d="M1855 507.5h3" stroke="#00ffff"/>
<text x="1861.6" y="511.6" font-size="12" fill="#00ffff" textLength="45" lengthAdjust="spacingAndGlyphs">195.860</text>
<path d="M1855 557.5h3" stroke="#00ffff"/>
<text x="1861.6" y="561.6" font-size="12" fill="#00ffff" textLength="45" lengthAdjust="spacingAndGlyphs">195.785</text>
<path d="M1855 607.5h3" stroke="#00ffff"/>
<text x="1861.6" y="611.6" font-size="12" fill="#00ffff" textLength="45" lengthAdjust="spacingAndGlyphs">195.710</text>
<path d="M1855 658.5h3" stroke="#00ffff"/>
<text x="1861.6" y="662.6" font-size="12" fill="#00ffff" textLength="45" lengthAdjust="spacingAndGlyphs">195.635</text>
<path d="M1855 708.5h3" stroke="#00ffff"/>
<text x="1861.6" y="712.6" font-size="12" fill="#00ffff" textLength="45" lengthAdjust="spacingAndGlyphs">195.560</text>
<path d="M1855 758.5h3" stroke="#00ffff"/>
<text x="1861.6" y="762.6" font-size="12" fill="#00ffff" textLength="45" lengthAdjust="spacingAndGlyphs">195.485</text>
<path d="M1855 808.5h3" stroke="#00ffff"/>
<text x="1861.6" y="812.6" font-size="12" fill="#00ffff" textLength="45" lengthAdjust="spacingAndGlyphs">195.410</text>
<rect x="1856" y="670" width="56" height="14" fill="#00ffff"/>
<text x="1861.6" y="681.5" font-size="12" fill="#000" textLength="45" lengthAdjust="spacingAndGlyphs">195.606</text>
<path d="M5.5 830v3" stroke="#00ffff"/>
<text x="4" y="844.7" font-size="12" fill="#00ffff" textLength="69" lengthAdjust="spacingAndGlyphs">22 Oct 2024</text>
<path d="M101.5 830v3" stroke="#00ffff"/>
<text x="100" y="844.7" font-size="12" fill="#00ffff" textLength="74" lengthAdjust="spacingAndGlyphs">22 Oct 02:09</text>
<path d="M197.5 830v3" stroke="#00ffff"/>
<text x="196" y="844.7" font-size="12" fill="#00ffff" textLength="74" lengthAdjust="spacingAndGlyphs">22 Oct 02:57</text>
<path d="M293.5 830v3" stroke="#00ffff"/>
<text x="292" y="844.7" font-size="12" fill="#00ffff" textLength="74" lengthAdjust="spacingAndGlyphs">22 Oct 03:45</text>
<path d="M389.5 830v3" stroke="#00ffff"/>
<text x="388" y="844.7" font-size="12" fill="#00ffff" textLength="74" lengthAdjust="spacingAndGlyphs">22 Oct 04:33</text>
<path d="M485.5 830v3" stroke="#00ffff"/>
<text x="484" y="844.7" font-size="12" fill="#00ffff" textLength="74" lengthAdjust="spacingAndGlyphs">22 Oct 05:21</text>
<path d="M581.5 830v3" stroke="#00ffff"/>
<text x="580" y="844.7" font-size="12" fill="#00ffff" textLength="74" lengthAdjust="spacingAndGlyphs">22 Oct 06:09</text>
<path d="M677.5 830v3" stroke="#00ffff"/>
<text x="676" y="844.7" font-size="12" fill="#00ffff" textLength="74" lengthAdjust="spacingAndGlyphs">22 Oct 06:57</text>
<path d="M773.5 830v3" stroke="#00ffff"/>
<text x="772" y="844.7" font-size="12" fill="#00ffff" textLength="74" lengthAdjust="spacingAndGlyphs">22 Oct 07:45</text>
<path d="M869.5 830v3" stroke="#00ffff"/>
<text x="868" y="844.7" font-size="12" fill="#00ffff" textLength="74" lengthAdjust="spacingAndGlyphs">22 Oct 08:33</text>
<path d="M965.5 830v3" stroke="#00ffff"/>
<text x="964" y="844.7" font-size="12" fill="#00ffff" textLength="74" lengthAdjust="spacingAndGlyphs">22 Oct 09:21</text>
<path d="M1061.5 830v3" stroke="#00ffff"/>
<text x="1060" y="844.7" font-size="12" fill="#00ffff" textLength="74" lengthAdjust="spacingAndGlyphs">22 Oct 10:09</text>
<path d="M1157.5 830v3" stroke="#00ffff"/>
<text x="1156" y="844.7" font-size="12" fill="#00ffff" textLength="74" lengthAdjust="spacingAndGlyphs">22 Oct 10:57</text>
<path d="M1253.5 830v3" stroke="#00ffff"/>
<text x="1252" y="844.7" font-size="12" fill="#00ffff" textLength="74" lengthAdjust="spacingAndGlyphs">22 Oct 11:45</text>
<path d="M1349.5 830v3" stroke="#00ffff"/>
<text x="1348" y="844.7" font-size="12" fill="#00ffff" textLength="74" lengthAdjust="spacingAndGlyphs">22 Oct 12:33</text>
<path d="M1445.5 830v3" stroke="#00ffff"/>
<text x="1444" y="844.7" font-size="12" fill="#00ffff" textLength="74" lengthAdjust="spacingAndGlyphs">22 Oct 13:21</text>
<rect x="9.5" y="67" width="245.5" height="161" rx="2.5" fill="#000" stroke="#808080" stroke-width="4"/>
<text x="33" y="85.6" font-size="17" fill="#fff" font-weight="bold" textLength="154" lengthAdjust="spacingAndGlyphs">JAZIB EAGLE V5</text>
<text x="15.5" y="112" font-size="16" fill="#fff" textLength="56.5" lengthAdjust="spacingAndGlyphs">Wins: 0</text>
<text x="15.5" y="128" font-size="16" fill="#fff" textLength="52.5" lengthAdjust="spacingAndGlyphs">Loss: 0</text>
<text x="15.5" y="145" font-size="16" fill="#fff" textLength="86" lengthAdjust="spacingAndGlyphs">Winrate:0%</text>
<rect x="11" y="151" width="198" height="2" fill="#fff"/>
<text x="15.5" y="172" font-size="14.5" fill="#fff" font-weight="bold" textLength="134" lengthAdjust="spacingAndGlyphs">Amount: 20 USD</text>
<text x="15.5" y="190" font-size="14.5" fill="#fff" font-weight="bold" textLength="131" lengthAdjust="spacingAndGlyphs">Profit: 0.00 USD</text>
<rect x="11" y="197" width="198" height="2" fill="#fff"/>
<text x="15.5" y="220" font-size="14.5" fill="#9acd32" font-weight="bold" textLength="43" lengthAdjust="spacingAndGlyphs">Time:</text>
<text x="71" y="220" font-size="14.5" fill="#9acd32" font-weight="bold" textLength="19.7" lengthAdjust="spacingAndGlyphs">54</text>
<text x="1586.3" y="816.5" font-size="18" fill="#fff" textLength="251" lengthAdjust="spacingAndGlyphs">Contact Telegram-@JazibAliii</text>
<defs><linearGradient id="gi" x1="0" y1="0" x2="1" y2="1"><stop offset="0" stop-color="#b9d9f5"/><stop offset="1" stop-color="#79acdf"/></linearGradient><linearGradient id="gd" x1="0" y1="0" x2="1" y2="1"><stop offset="0" stop-color="#c0f0f8"/><stop offset="1" stop-color="#6fd0e2"/></linearGradient><clipPath id="dlg"><rect x="1051" y="40" width="802" height="369" rx="8"/></clipPath></defs>
<g clip-path="url(#dlg)">
<rect x="1051" y="40" width="802" height="369" fill="#f0f0f0"/>
<rect x="1051" y="40" width="802" height="37" fill="#f0f1f6"/>
</g>
<text x="1061.5" y="63.9" font-size="15" fill="#1a1a1a" textLength="266" lengthAdjust="spacingAndGlyphs">Custom Indicator - JAZIB EAGLE V5 V_fix</text>
<text x="1762.5" y="63.8" font-size="15" fill="#1a1a1a" textLength="7" lengthAdjust="spacingAndGlyphs">?</text>
<path d="M1817 52l12 12M1829 52l-12 12" stroke="#1a1a1a" stroke-width="1.2"/>
<rect x="1059.5" y="108.5" width="786" height="255" fill="#f9f9f9" stroke="#e3e3e3"/>
<rect x="1062.2" y="87.5" width="45.299999999999955" height="21" fill="#eeeeee" stroke="#e0e0e0"/>
<text x="1067" y="103" font-size="13.5" fill="#1a1a1a" textLength="35.3" lengthAdjust="spacingAndGlyphs">About</text>
<rect x="1108.5" y="87.5" width="64.29999999999995" height="21" fill="#eeeeee" stroke="#e0e0e0"/>
<text x="1115" y="103" font-size="13.5" fill="#1a1a1a" textLength="51.5" lengthAdjust="spacingAndGlyphs">Common</text>
<rect x="1173.3" y="86" width="50.700000000000045" height="23" fill="#f9f9f9" stroke="#e3e3e3"/>
<rect x="1173.8" y="107" width="49.700000000000045" height="3" fill="#f9f9f9"/>
<text x="1181" y="102" font-size="13.5" fill="#1a1a1a" textLength="35.5" lengthAdjust="spacingAndGlyphs">Inputs</text>
<rect x="1224.5" y="87.5" width="98.5" height="21" fill="#eeeeee" stroke="#e0e0e0"/>
<text x="1229" y="103" font-size="13.5" fill="#1a1a1a" textLength="88.4" lengthAdjust="spacingAndGlyphs">Dependencies</text>
<rect x="1324.0" y="87.5" width="50.09999999999991" height="21" fill="#eeeeee" stroke="#e0e0e0"/>
<text x="1330" y="103" font-size="13.5" fill="#1a1a1a" textLength="38.5" lengthAdjust="spacingAndGlyphs">Colors</text>
<rect x="1375.1" y="87.5" width="83.70000000000005" height="21" fill="#eeeeee" stroke="#e0e0e0"/>
<text x="1381" y="103" font-size="13.5" fill="#1a1a1a" textLength="75.5" lengthAdjust="spacingAndGlyphs">Visualization</text>
<rect x="1071.5" y="118.5" width="614" height="236" fill="#fff" stroke="#8c9096"/>
<text x="1079" y="136.5" font-size="13.5" fill="#1a1a1a" textLength="50.5" lengthAdjust="spacingAndGlyphs">Variable</text>
<text x="1383" y="136.5" font-size="13.5" fill="#1a1a1a" textLength="35" lengthAdjust="spacingAndGlyphs">Value</text>
<path d="M1377.5 121v22" stroke="#e8e8e8"/>
<path d="M1073 168.5H1684" stroke="#c0c0c0"/>
<path d="M1377.5 144v24" stroke="#d8d8d8"/>
<path d="M1074 148.5q0-2 2-2h13.5l5.5 4.5v13.5l-1 1.5-1.2-1.5-1.5 1-1.8-1.2-1.6 1.2-1.6-1.2-1.8 1.2-1.6-1.2-1.6 1.2-1.8-1.2-1.6 1.2-1.5-1.2-1 1.2z" fill="url(#gi)" stroke="#6a9fd0" stroke-width="0.7"/>
<path d="M1089 147.5v4h4.5" fill="none" stroke="#d8ecfa" stroke-width="1"/>
<text x="1076.5" y="159.8" font-size="8.5" fill="#0a1e3c" font-weight="bold" textLength="13" lengthAdjust="spacingAndGlyphs">123</text>
<text x="1100.6" y="161" font-size="13.5" fill="#1a1a1a" textLength="82.5" lengthAdjust="spacingAndGlyphs">Backtest Bars</text>
<text x="1383" y="161" font-size="13.5" fill="#1a1a1a" textLength="21" lengthAdjust="spacingAndGlyphs">500</text>
<rect x="1073" y="169" width="611" height="25" fill="#eaeaea"/>
<path d="M1073 193.5H1684" stroke="#c0c0c0"/>
<path d="M1377.5 169v24" stroke="#d8d8d8"/>
<path d="M1074 173.5q0-2 2-2h13.5l5.5 4.5v13.5l-1 1.5-1.2-1.5-1.5 1-1.8-1.2-1.6 1.2-1.6-1.2-1.8 1.2-1.6-1.2-1.6 1.2-1.8-1.2-1.6 1.2-1.5-1.2-1 1.2z" fill="url(#gd)" stroke="#5ec0d0" stroke-width="0.7"/>
<path d="M1089 172.5v4h4.5" fill="none" stroke="#d8ecfa" stroke-width="1"/>
<text x="1076.5" y="184.8" font-size="8.5" fill="#0f4a55" font-weight="bold" textLength="11" lengthAdjust="spacingAndGlyphs">1/2</text>
<text x="1100.6" y="186" font-size="13.5" fill="#1a1a1a" textLength="85.5" lengthAdjust="spacingAndGlyphs">Trade Amount</text>
<text x="1383" y="186" font-size="13.5" fill="#1a1a1a" textLength="23.5" lengthAdjust="spacingAndGlyphs">20.0</text>
<path d="M1073 218.5H1684" stroke="#c0c0c0"/>
<path d="M1377.5 194v24" stroke="#d8d8d8"/>
<path d="M1074 198.5q0-2 2-2h13.5l5.5 4.5v13.5l-1 1.5-1.2-1.5-1.5 1-1.8-1.2-1.6 1.2-1.6-1.2-1.8 1.2-1.6-1.2-1.6 1.2-1.8-1.2-1.6 1.2-1.5-1.2-1 1.2z" fill="url(#gi)" stroke="#6a9fd0" stroke-width="0.7"/>
<path d="M1089 197.5v4h4.5" fill="none" stroke="#d8ecfa" stroke-width="1"/>
<text x="1076.5" y="209.8" font-size="8.5" fill="#0a1e3c" font-weight="bold" textLength="13" lengthAdjust="spacingAndGlyphs">123</text>
<text x="1100.6" y="211" font-size="13.5" fill="#1a1a1a" textLength="20.5" lengthAdjust="spacingAndGlyphs">Bot</text>
<text x="1383" y="211" font-size="13.5" fill="#1a1a1a" textLength="24" lengthAdjust="spacingAndGlyphs">OFF</text>
<rect x="1073" y="219" width="611" height="25" fill="#eaeaea"/>
<path d="M1073 243.5H1684" stroke="#c0c0c0"/>
<path d="M1377.5 219v24" stroke="#d8d8d8"/>
<path d="M1074 223.5q0-2 2-2h13.5l5.5 4.5v13.5l-1 1.5-1.2-1.5-1.5 1-1.8-1.2-1.6 1.2-1.6-1.2-1.8 1.2-1.6-1.2-1.6 1.2-1.8-1.2-1.6 1.2-1.5-1.2-1 1.2z" fill="url(#gi)" stroke="#6a9fd0" stroke-width="0.7"/>
<path d="M1089 222.5v4h4.5" fill="none" stroke="#d8ecfa" stroke-width="1"/>
<text x="1076.5" y="234.8" font-size="8.5" fill="#0a1e3c" font-weight="bold" textLength="13" lengthAdjust="spacingAndGlyphs">123</text>
<text x="1100.6" y="236" font-size="13.5" fill="#1a1a1a" textLength="93.5" lengthAdjust="spacingAndGlyphs">Expiration Type</text>
<text x="1383" y="236" font-size="13.5" fill="#1a1a1a" textLength="68.5" lengthAdjust="spacingAndGlyphs">TimeFrame</text>
<path d="M1073 268.5H1684" stroke="#c0c0c0"/>
<path d="M1377.5 244v24" stroke="#d8d8d8"/>
<path d="M1074 248.5q0-2 2-2h13.5l5.5 4.5v13.5l-1 1.5-1.2-1.5-1.5 1-1.8-1.2-1.6 1.2-1.6-1.2-1.8 1.2-1.6-1.2-1.6 1.2-1.8-1.2-1.6 1.2-1.5-1.2-1 1.2z" fill="url(#gi)" stroke="#6a9fd0" stroke-width="0.7"/>
<path d="M1089 247.5v4h4.5" fill="none" stroke="#d8ecfa" stroke-width="1"/>
<text x="1076.5" y="259.8" font-size="8.5" fill="#0a1e3c" font-weight="bold" textLength="13" lengthAdjust="spacingAndGlyphs">123</text>
<text x="1100.6" y="261" font-size="13.5" fill="#1a1a1a" textLength="270.5" lengthAdjust="spacingAndGlyphs">Expiration in Number of Candles (TimeFrame)</text>
<text x="1383" y="261" font-size="13.5" fill="#1a1a1a" textLength="6" lengthAdjust="spacingAndGlyphs">1</text>
<rect x="1073" y="269" width="611" height="25" fill="#eaeaea"/>
<path d="M1073 293.5H1684" stroke="#c0c0c0"/>
<path d="M1377.5 269v24" stroke="#d8d8d8"/>
<path d="M1074 273.5q0-2 2-2h13.5l5.5 4.5v13.5l-1 1.5-1.2-1.5-1.5 1-1.8-1.2-1.6 1.2-1.6-1.2-1.8 1.2-1.6-1.2-1.6 1.2-1.8-1.2-1.6 1.2-1.5-1.2-1 1.2z" fill="url(#gi)" stroke="#6a9fd0" stroke-width="0.7"/>
<path d="M1089 272.5v4h4.5" fill="none" stroke="#d8ecfa" stroke-width="1"/>
<text x="1076.5" y="284.8" font-size="8.5" fill="#0a1e3c" font-weight="bold" textLength="13" lengthAdjust="spacingAndGlyphs">123</text>
<text x="1100.6" y="286" font-size="13.5" fill="#1a1a1a" textLength="85.5" lengthAdjust="spacingAndGlyphs">Expiry Minutes</text>
<text x="1383" y="286" font-size="13.5" fill="#1a1a1a" textLength="6" lengthAdjust="spacingAndGlyphs">1</text>
<rect x="1697.5" y="286.5" width="137" height="25" rx="4" fill="#fdfdfd" stroke="#d0d0d0" stroke-width="1"/>
<text x="1751.0" y="304.0" font-size="14" fill="#1a1a1a" textLength="30" lengthAdjust="spacingAndGlyphs">Load</text>
<rect x="1697.5" y="326.5" width="137" height="25" rx="4" fill="#fdfdfd" stroke="#d0d0d0" stroke-width="1"/>
<text x="1750.5" y="344.0" font-size="14" fill="#1a1a1a" textLength="31" lengthAdjust="spacingAndGlyphs">Save</text>
<rect x="1528.5" y="372.5" width="97" height="25" rx="4" fill="#fdfdfd" stroke="#0067c0" stroke-width="1.5"/>
<text x="1567.75" y="390.0" font-size="14" fill="#1a1a1a" textLength="18.5" lengthAdjust="spacingAndGlyphs">OK</text>
<rect x="1636.5" y="372.5" width="97" height="25" rx="4" fill="#fdfdfd" stroke="#d0d0d0" stroke-width="1"/>
<text x="1664.25" y="390.0" font-size="14" fill="#1a1a1a" textLength="41.5" lengthAdjust="spacingAndGlyphs">Cancel</text>
<rect x="1744.5" y="372.5" width="97" height="25" rx="4" fill="#fdfdfd" stroke="#d0d0d0" stroke-width="1"/>
<text x="1774.25" y="390.0" font-size="14" fill="#1a1a1a" textLength="37.5" lengthAdjust="spacingAndGlyphs">Reset</text>
<rect x="1843" y="400" width="2.5" height="2.5" fill="#c4c4c4"/>
<rect x="1847" y="400" width="2.5" height="2.5" fill="#c4c4c4"/>
<rect x="1843" y="404" width="2.5" height="2.5" fill="#c4c4c4"/>
<rect x="1847" y="404" width="2.5" height="2.5" fill="#c4c4c4"/>
<rect x="0" y="853" width="1920" height="145" fill="#f0f0f0"/>
<path d="M6 862.5l7.5 6.5M13.5 862.5l-7.5 6.5" stroke="#000" stroke-width="1.6"/>
<rect x="3" y="877" width="16" height="115" fill="#d0dfee"/>
<text transform="translate(17,987) rotate(-90)" font-size="14" fill="#1a1a1a" textLength="51" lengthAdjust="spacingAndGlyphs">Terminal</text>
<rect x="20" y="859" width="1873" height="102" fill="#fff"/>
<rect x="20" y="859" width="1895" height="1" fill="#a0a0a0"/>
<rect x="20" y="859" width="1" height="105" fill="#a0a0a0"/>
<rect x="1893" y="860" width="22" height="104" fill="#f0f0f0"/>
<rect x="1901" y="881" width="6" height="21" fill="#888888"/>
<rect x="21" y="887" width="1872" height="24" fill="#eaeaea"/>
<rect x="21" y="936" width="1872" height="24" fill="#eaeaea"/>
<rect x="21" y="886" width="1872" height="1" fill="#c4c4c4"/>
<rect x="21" y="910" width="1872" height="1" fill="#c4c4c4"/>
<rect x="21" y="935" width="1872" height="1" fill="#c4c4c4"/>
<rect x="21" y="960" width="1872" height="1" fill="#c4c4c4"/>
<rect x="219" y="860" width="1" height="101" fill="#d8d8d8"/>
<text x="27.3" y="879.3" font-size="15" fill="#1a1a1a" textLength="32.5" lengthAdjust="spacingAndGlyphs">Time</text>
<text x="227.3" y="879.3" font-size="15" fill="#1a1a1a" textLength="57.3" lengthAdjust="spacingAndGlyphs">Message</text>
<circle cx="32.5" cy="897.6" r="4" fill="#b4b4b4" stroke="#8a8a8a" stroke-width="1.2"/>
<path d="M30.5 897.1l2.5-2" stroke="#e8e8e8" stroke-width="1.2"/>
<text x="48" y="903.6" font-size="15" fill="#1a1a1a" textLength="154.3" lengthAdjust="spacingAndGlyphs">2024.10.22 07:38:53.522</text>
<text x="226" y="903.6" font-size="15" fill="#1a1a1a" textLength="286.5" lengthAdjust="spacingAndGlyphs">JAZIB EAGLE V5 V_fix GBPJPY,M1: initialized</text>
<circle cx="32.5" cy="922.6" r="4" fill="#b4b4b4" stroke="#8a8a8a" stroke-width="1.2"/>
<path d="M30.5 922.1l2.5-2" stroke="#e8e8e8" stroke-width="1.2"/>
<text x="48" y="928.6" font-size="15" fill="#1a1a1a" textLength="154.3" lengthAdjust="spacingAndGlyphs">2024.10.22 07:38:53.522</text>
<text x="226" y="928.6" font-size="15" fill="#1a1a1a" textLength="392.75" lengthAdjust="spacingAndGlyphs">JAZIB EAGLE V5 V_fix GBPJPY,M1: VSN successfully received.</text>
<circle cx="32.5" cy="947.6" r="4" fill="#b4b4b4" stroke="#8a8a8a" stroke-width="1.2"/>
<path d="M30.5 947.1l2.5-2" stroke="#e8e8e8" stroke-width="1.2"/>
<text x="48" y="953.6" font-size="15" fill="#1a1a1a" textLength="154.3" lengthAdjust="spacingAndGlyphs">2024.10.22 07:38:52.071</text>
<text x="226" y="953.6" font-size="15" fill="#1a1a1a" textLength="465.7" lengthAdjust="spacingAndGlyphs">Custom indicator JAZIB EAGLE V5 V_fix GBPJPY,M1: loaded successfully</text>
<rect x="20" y="964" width="1895" height="1.3" fill="#000"/>
<rect x="20" y="964" width="1" height="27" fill="#a0a0a0"/>
<rect x="0" y="991" width="1920" height="1" fill="#ffffff"/>
<rect x="0" y="996" width="1920" height="1" fill="#a8a8a8"/>
<rect x="1915" y="853" width="1" height="140" fill="#ffffff"/>
<rect x="771.5" y="964.5" width="72" height="23.5" fill="#fff" stroke="#000" stroke-width="1.5"/>
<rect x="772.3" y="963" width="70.4" height="2.2" fill="#fff"/>
<text x="36.1" y="982" font-size="15" fill="#8a8a8a" textLength="36.8" lengthAdjust="spacingAndGlyphs">Trade</text>
<text x="99.4" y="982" font-size="15" fill="#8a8a8a" textLength="59.1" lengthAdjust="spacingAndGlyphs">Exposure</text>
<text x="184" y="982" font-size="15" fill="#8a8a8a" textLength="104.75" lengthAdjust="spacingAndGlyphs">Account History</text>
<text x="314.3" y="982" font-size="15" fill="#8a8a8a" textLength="35.9" lengthAdjust="spacingAndGlyphs">News</text>
<text x="375.5" y="982" font-size="15" fill="#8a8a8a" textLength="37.2" lengthAdjust="spacingAndGlyphs">Alerts</text>
<text x="438" y="982" font-size="15" fill="#8a8a8a" textLength="53.9" lengthAdjust="spacingAndGlyphs">Mailbox</text>
<text x="526.8" y="982" font-size="15" fill="#8a8a8a" textLength="46.2" lengthAdjust="spacingAndGlyphs">Market</text>
<text x="614.6" y="982" font-size="15" fill="#8a8a8a" textLength="49.2" lengthAdjust="spacingAndGlyphs">Articles</text>
<text x="688.6" y="982" font-size="15" fill="#8a8a8a" textLength="70" lengthAdjust="spacingAndGlyphs">Code Base</text>
<text x="784" y="982" font-size="15" fill="#000" textLength="47.9" lengthAdjust="spacingAndGlyphs">Experts</text>
<text x="856.3" y="982" font-size="15" fill="#8a8a8a" textLength="47" lengthAdjust="spacingAndGlyphs">Journal</text>
<rect x="86.9" y="968" width="1" height="18" fill="#505050"/>
<rect x="171.6" y="968" width="1" height="18" fill="#505050"/>
<rect x="301.8" y="968" width="1" height="18" fill="#505050"/>
<rect x="362.4" y="968" width="1" height="18" fill="#505050"/>
<rect x="425.5" y="968" width="1" height="18" fill="#505050"/>
<rect x="514.8" y="968" width="1" height="18" fill="#505050"/>
<rect x="602.3" y="968" width="1" height="18" fill="#505050"/>
<rect x="676.6" y="968" width="1" height="18" fill="#505050"/>
<rect x="916.4" y="968" width="1" height="18" fill="#505050"/>
<text x="495" y="985" font-size="11" fill="#e01010" font-weight="bold" textLength="7" lengthAdjust="spacingAndGlyphs">6</text>
<text x="576" y="985" font-size="11" fill="#e01010" font-weight="bold" textLength="13.5" lengthAdjust="spacingAndGlyphs">87</text>
</svg></body></html>
